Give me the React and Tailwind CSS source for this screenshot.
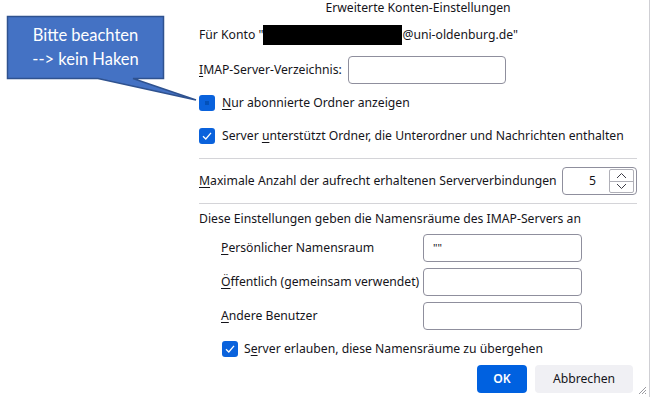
import React from "react";

const U = ({ children }) => <span className="underline underline-offset-2">{children}</span>;

function Check({ checked = true, filled = false }) {
  return (
    <span className="w-4 h-4 rounded-[3px] bg-[#0a62dc] flex items-center justify-center shrink-0">
      {checked && (
        <svg width="12" height="12" viewBox="0 0 12 12">
          <path d="M2 6.3 L4.8 9 L10 2.8" fill="none" stroke="white" strokeWidth="1.3" />
        </svg>
      )}
      {filled && <span className="w-1 h-1 bg-[#0350b8]" />}
    </span>
  );
}

function Field({ value = "" }) {
  return (
    <div className="w-[159px] h-[28px] border border-[#8f8f9d] rounded-[4px] flex items-center px-[9px] text-[11px] text-[#15141a]">
      {value}
    </div>
  );
}

function Spin() {
  return (
    <div className="w-[75px] h-[28px] border border-[#8f8f9d] rounded-[4px] flex items-center pl-2 pr-[2px] shrink-0">
      <span className="flex-1 text-right pr-[13px]">5</span>
      <div className="w-[25px] h-[24px] flex flex-col border border-[#b0b0b8] rounded-[2px]">
        <div className="flex-1 flex items-center justify-center border-b border-[#b0b0b8]">
          <svg width="11" height="7" viewBox="0 0 11 7">
            <path d="M1 6 L5.5 1.5 L10 6" fill="none" stroke="#3b3b45" strokeWidth="1" />
          </svg>
        </div>
        <div className="flex-1 flex items-center justify-center">
          <svg width="11" height="7" viewBox="0 0 11 7">
            <path d="M1 1 L5.5 5.5 L10 1" fill="none" stroke="#3b3b45" strokeWidth="1" />
          </svg>
        </div>
      </div>
    </div>
  );
}

export default function App() {
  return (
    <div className="relative w-[650px] h-[397px] bg-white overflow-hidden whitespace-nowrap text-[#15141a] text-[12.2px] font-['Noto_Sans',sans-serif]">
      <div className="flex h-full">
        <div className="w-[199px] shrink-0" />
        <div className="w-[438px] flex flex-col">
          <div className="h-[16px] text-center leading-[16px]">Erweiterte Konten-Einstellungen</div>
          <div className="mt-[9px] h-[20px] flex items-center">
            <span>Für Konto "</span>
            <span className="w-[139px] h-[20px] bg-black" />
            <span>@uni-oldenburg.de"</span>
          </div>
          <div className="mt-[11px] h-[28px] flex items-center gap-[6px]">
            <span><U>I</U>MAP-Server-Verzeichnis:</span>
            <div className="w-[158px] h-[28px] border border-[#8f8f9d] rounded-[4px]" />
          </div>
          <div className="mt-[11px] h-4 flex items-center gap-[7px]">
            <Check checked={false} filled />
            <span><U>N</U>ur abonnierte Ordner anzeigen</span>
          </div>
          <div className="mt-[17px] h-4 flex items-center gap-[7px]">
            <Check />
            <span>Server <U>u</U>nterstützt Ordner, die Unterordner und Nachrichten enthalten</span>
          </div>
          <div className="mt-[14px] h-px bg-[#d4d4d8]" />
          <div className="mt-[8px] h-[28px] flex items-center justify-between">
            <span><U>M</U>aximale Anzahl der aufrecht erhaltenen Serververbindungen</span>
            <Spin />
          </div>
          <div className="mt-[8px] h-px bg-[#d4d4d8]" />
          <div className="mt-[5px] h-[20px] flex items-center">Diese Einstellungen geben die Namensräume des IMAP-Servers an</div>
          <div className="pl-[22px] flex flex-col gap-[6px] mt-[5px]">
            <div className="flex items-center h-[28px]">
              <span className="w-[202px]"><U>P</U>ersönlicher Namensraum</span>
              <Field value={'""'} />
            </div>
            <div className="flex items-center h-[28px]">
              <span className="w-[202px]"><U>Ö</U>ffentlich (gemeinsam verwendet)</span>
              <Field />
            </div>
            <div className="flex items-center h-[28px]">
              <span className="w-[202px]"><U>A</U>ndere Benutzer</span>
              <Field />
            </div>
          </div>
          <div className="pl-[23px] mt-[11px] h-4 flex items-center gap-[6px]">
            <Check />
            <span>S<U>e</U>rver erlauben, diese Namensräume zu übergehen</span>
          </div>
          <div className="mt-[8px] flex justify-end gap-2 pr-1">
            <button className="w-[50px] h-[28px] rounded-[4px] bg-[#0061e0] text-white font-semibold">OK</button>
            <button className="w-[98px] h-[28px] rounded-[4px] bg-[#f0f0f4]">Abbrechen</button>
          </div>
        </div>
        <div className="flex-1 border-r border-[#cfcfd4] relative">
          <svg className="absolute right-[2px] bottom-[2px]" width="9" height="9" viewBox="0 0 9 9">
            <path d="M1 8 L8 1 M4 8 L8 4 M7 8 L8 7" stroke="#9a9aa0" strokeWidth="1" />
          </svg>
        </div>
      </div>

      <div className="absolute left-0 top-0 w-[200px] h-[102px]">
        <svg width="200" height="102" viewBox="0 0 200 102" className="absolute inset-0">
          <path
            d="M7.5 16.5 H163.5 V78.5 H133 L196 100 L98 78.5 H7.5 Z"
            fill="#4472c4"
            stroke="#2f528f"
            strokeWidth="1.5"
            strokeLinejoin="miter"
          />
        </svg>
        <div className="absolute left-[7px] top-[16px] w-[157px] h-[62px] flex flex-col items-center justify-center text-white text-[16.5px] leading-[24px] font-['Lato',sans-serif]">
          <span>Bitte beachten</span>
          <span>--&gt; kein Haken</span>
        </div>
      </div>
    </div>
  );
}
